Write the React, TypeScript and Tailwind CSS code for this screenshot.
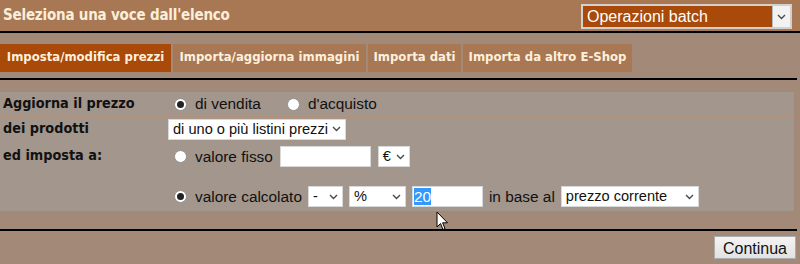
import React from "react";

const sans = { fontFamily: '"Liberation Sans", Arial, sans-serif' };
const verdana = { fontFamily: '"DejaVu Sans", Verdana, sans-serif' };
const tahoma = { fontFamily: '"DejaVu Sans", Tahoma, sans-serif', fontStretch: "condensed" };

const Chevron = ({ className = "" }: { className?: string }) => (
  <svg width="9" height="6" viewBox="0 0 9 6" className={className}>
    <path d="M1 1 L4.5 4.5 L8 1" fill="none" stroke="#4a4a4a" strokeWidth="1.4" />
  </svg>
);

const Select = ({ value, w }: { value: string; w: string }) => (
  <div
    className={`flex h-[21px] items-center justify-between whitespace-nowrap border border-[#d9d9d9] bg-white pl-[4px] pr-[4px] text-[14.6px] text-[#111] ${w}`}
  >
    <span className="leading-none">{value}</span>
    <Chevron />
  </div>
);

const Radio = ({ checked }: { checked?: boolean }) => (
  <span className="ml-[8px] mr-[8px] flex h-[13px] w-[13px] shrink-0 items-center justify-center rounded-full border border-[#8f8f8f] bg-white">
    {checked && <span className="h-[7px] w-[7px] rounded-full bg-[#222]" />}
  </span>
);

const tabs = [
  { name: "Imposta/modifica prezzi", active: true, w: "w-[171px]" },
  { name: "Importa/aggiorna immagini", active: false, w: "w-[193px]" },
  { name: "Importa dati", active: false, w: "w-[93px]" },
  { name: "Importa da altro E-Shop", active: false, w: "w-[169px]" },
];

export default function App() {
  return (
    <div className="relative h-[264px] w-[800px] overflow-hidden bg-[#a38a78]">
      {/* header */}
      <div className="flex h-[31px] items-center justify-between bg-[#a87754] pl-[3px] pr-[8px]">
        <span className="text-[15px] font-bold tracking-[-0.2px] text-[#fbefd9]" style={tahoma}>
          Seleziona una voce dall'elenco
        </span>
        <div
          className="mt-[2px] flex h-[25px] w-[211px] items-center justify-between border-2 border-[#d4d0cc] bg-[#a9490a] pl-[4px]"
          style={sans}
        >
          <span className="text-[16px] text-white">Operazioni batch</span>
          <span className="flex h-full w-[18px] items-center justify-center border-l border-[#bbb] bg-[#f2f2f2]">
            <Chevron />
          </span>
        </div>
      </div>
      <div className="h-[2px] bg-black" />

      {/* tabs */}
      <div className="mt-[11px] flex gap-[2px]" style={verdana}>
        {tabs.map((t) => (
          <div
            key={t.name}
            className={`flex h-[28px] items-center justify-center text-[11.7px] font-bold text-[#fdf0dc] ${t.w} ${
              t.active ? "bg-[#a9490a]" : "bg-[#a87754]"
            }`}
          >
            {t.name}
          </div>
        ))}
      </div>
      <div className="mr-[3px] mt-[6px] h-[2px] bg-black" />

      {/* form table */}
      <div className="mr-[6px] mt-[12px] bg-[#a3968c] text-[#111]">
        <div className="flex h-[25px] border-b border-[#b3907a]">
          <div
            className="flex w-[166px] items-center border-r border-[#b3907a] pl-[3px] text-[14.3px] font-bold"
            style={tahoma}
          >
            Aggiorna il prezzo
          </div>
          <div className="flex items-center text-[15.4px]" style={sans}>
            <Radio checked />
            <span>di vendita</span>
            <span className="w-[18px]" />
            <Radio />
            <span>d'acquisto</span>
          </div>
        </div>
        <div className="flex h-[25px] border-b border-[#b3907a]">
          <div
            className="flex w-[166px] items-center border-r border-[#b3907a] pl-[3px] text-[14.3px] font-bold"
            style={tahoma}
          >
            dei prodotti
          </div>
          <div className="flex items-center pl-[2px]" style={sans}>
            <Select value="di uno o più listini prezzi" w="w-[178px]" />
          </div>
        </div>
        <div className="flex h-[69px]">
          <div
            className="w-[166px] border-r border-[#b3907a] pl-[3px] pt-[3px] text-[14.3px] font-bold"
            style={tahoma}
          >
            ed imposta a:
          </div>
          <div className="flex flex-col gap-[19px] pt-[4px] text-[15.4px]" style={sans}>
            <div className="flex h-[21px] items-center">
              <Radio />
              <span>valore fisso</span>
              <span className="ml-[7px] h-[21px] w-[91px] border border-[#d9d9d9] bg-white" />
              <span className="ml-[7px]">
                <Select value="€" w="w-[32px]" />
              </span>
            </div>
            <div className="flex h-[21px] items-center">
              <Radio checked />
              <span>valore calcolato</span>
              <span className="ml-[6px]">
                <Select value="-" w="w-[35px]" />
              </span>
              <span className="ml-[6px]">
                <Select value="%" w="w-[57px]" />
              </span>
              <span className="ml-[6px] flex h-[21px] w-[71px] items-center border border-[#d9d9d9] bg-white pl-[1px]">
                <span className="bg-[#3399ff] leading-[17px] text-white">20</span>
              </span>
              <span className="ml-[6px]">in base al</span>
              <span className="ml-[6px]">
                <Select value="prezzo corrente" w="w-[138px]" />
              </span>
            </div>
          </div>
        </div>
      </div>

      <div className="mr-[3px] mt-[18px] h-[2px] bg-black" />

      {/* footer */}
      <div className="mr-[4px] mt-[5px] flex justify-end">
        <button
          className="h-[23px] w-[82px] border border-[#adadad] bg-gradient-to-b from-[#f4f4f4] to-[#e2e2e2] text-[16px] text-[#111]"
          style={sans}
        >
          Continua
        </button>
      </div>

      {/* mouse pointer */}
      <svg
        className="pointer-events-none absolute left-[436px] top-[211px]"
        width="13"
        height="21"
        viewBox="0 0 13 21"
      >
        <path
          d="M1 1 L1 16 L4.5 12.5 L7 18.5 L9 17.6 L6.6 11.8 L11.5 11.8 Z"
          fill="white"
          stroke="black"
          strokeWidth="1"
          strokeLinejoin="round"
        />
      </svg>
    </div>
  );
}
